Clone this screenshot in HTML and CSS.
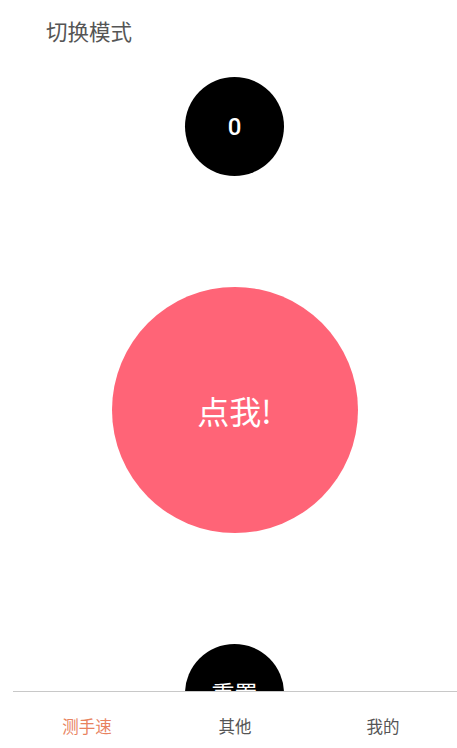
FILE: index.html
```html
<!DOCTYPE html>
<html lang="zh">
<head>
<meta charset="utf-8">
<link rel="stylesheet" href="styles.css">
</head>
<body>
<div class="app">
  <main class="content">
    <div class="title">切换模式</div>
    <div class="circle small top"><span class="count">0</span></div>
    <div class="circle big"><span class="tap">点我!</span></div>
    <div class="circle small reset"><span class="reset-text">重置</span></div>
  </main>
  <nav class="tabbar">
    <div class="tab active">测手速</div>
    <div class="tab">其他</div>
    <div class="tab">我的</div>
  </nav>
</div>
</body>
</html>
```

FILE: styles.css
```css
html, body {
  margin: 0;
  padding: 0;
  background: #fff;
}
body {
  font-family: "Noto Sans CJK SC", "Noto Sans", Roboto, sans-serif;
}
.app {
  width: 457px;
  height: 748px;
  display: flex;
  flex-direction: column;
  overflow: hidden;
}
.content {
  height: 691px;
  overflow: hidden;
  display: flex;
  flex-direction: column;
  align-items: center;
  flex-shrink: 0;
  padding-left: 12px;
}
.title {
  align-self: flex-start;
  padding: 15px 0 0 34px;
  font-size: 21.5px;
  line-height: 32px;
  color: #555;
  height: 32px;
  margin-bottom: 1px;
}
.circle {
  border-radius: 50%;
  display: flex;
  align-items: center;
  justify-content: center;
  flex-shrink: 0;
  color: #fff;
}
.small {
  width: 99px;
  height: 99px;
  background: #000;
}
.top {
  margin-top: 29px;
}
.count {
  font-family: Roboto, "Noto Sans", sans-serif;
  font-weight: 500;
  font-size: 24px;
}
.big {
  width: 246px;
  height: 246px;
  background: #ff6477;
  margin-top: 111px;
}
.tap {
  font-size: 32px;
}
.reset {
  margin-top: 111px;
  align-items: flex-start;
}
.reset-text {
  font-size: 23px;
  line-height: 30px;
  margin-top: 33px;
}
.tabbar {
  margin-left: 13px;
  border-top: 1px solid #c8c8c8;
  flex: 1;
  display: grid;
  grid-template-columns: 1fr 1fr 1fr;
  align-items: center;
}
.tab {
  text-align: center;
  font-size: 16.5px;
  color: #555;
  padding-top: 11px;
}
.tab.active {
  color: #e8835f;
}
```
